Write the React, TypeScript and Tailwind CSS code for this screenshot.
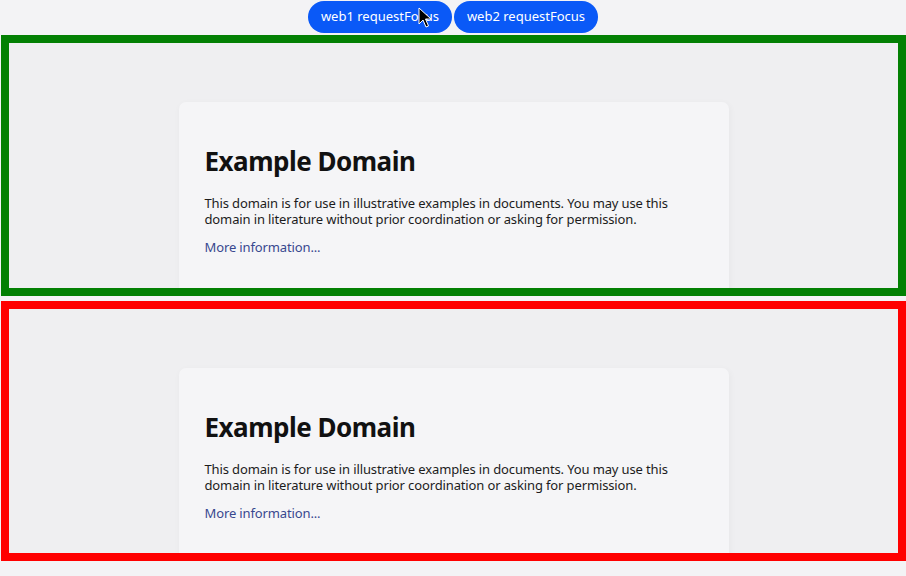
import React from "react";

function WebPanel({ borderColor }: { borderColor: string }) {
  return (
    <div className={`h-full border-[8px] ${borderColor} bg-[#efeff1] overflow-hidden`}>
      <div className="flex justify-center">
        <div className="mt-[59px] w-[550px] h-[400px] rounded-[7px] bg-[#f5f5f7] shadow-[1px_2px_6px_1px_rgba(0,0,0,0.03)] px-[26px] pt-[43px]">
          <h1 className="text-[26px] leading-[32px] font-bold tracking-[-0.5px] text-[#111]">Example Domain</h1>
          <p className="mt-[19px] text-[13px] leading-[15.5px] tracking-[-0.13px] text-[#1c1c1c]">
            This domain is for use in illustrative examples in documents. You may use this
            domain in literature without prior coordination or asking for permission.
          </p>
          <p className="mt-[13px] text-[13px] leading-[15.5px] tracking-[-0.13px] text-[#38488f]">More information...</p>
        </div>
      </div>
    </div>
  );
}

function App() {
  return (
    <div
      className="relative w-[906px] h-[576px] bg-[#f3f3f5] flex flex-col overflow-hidden"
      style={{ fontFamily: '"Noto Sans", "Open Sans", sans-serif' }}
    >
      <div className="flex justify-center gap-[2px] pt-[1px]">
        <button className="w-[144px] h-[32px] rounded-full bg-[#0a59f7] text-white text-[13px]">
          web1 requestFocus
        </button>
        <button className="w-[144px] h-[32px] rounded-full bg-[#0a59f7] text-white text-[13px]">
          web2 requestFocus
        </button>
      </div>
      <div className="mt-[2px] h-[261px] pl-[1px]">
        <WebPanel borderColor="border-[#038003]" />
      </div>
      <div className="mt-[5px] h-[260px] pl-[1px]">
        <WebPanel borderColor="border-[#ff0000]" />
      </div>
      <svg className="absolute left-[418px] top-[7px]" width="14" height="22" viewBox="0 0 14 22">
        <path d="M1 1 L1 17 L5 13 L8 20 L10.5 19 L7.5 12 L13 12 Z" fill="#000" stroke="#fff" strokeWidth="1" />
      </svg>
    </div>
  );
}

export default App;
